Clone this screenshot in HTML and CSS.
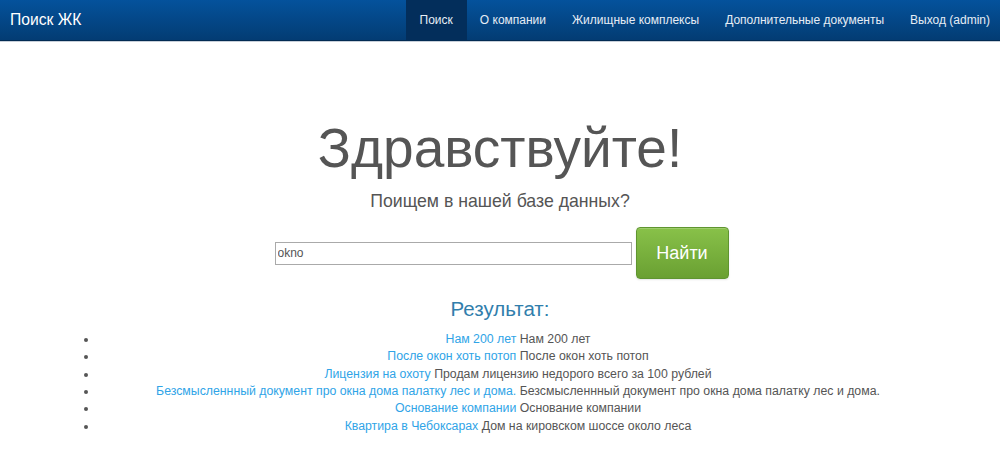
FILE: index.html
```html
<!DOCTYPE html>
<html lang="ru">
<head>
<meta charset="utf-8">
<title>Поиск ЖК</title>
<link rel="stylesheet" href="styles.css">
</head>
<body>
<header class="navbar">
  <a class="brand" href="#">Поиск ЖК</a>
  <ul class="nav">
    <li class="active"><a href="#">Поиск</a></li>
    <li><a href="#">О компании</a></li>
    <li><a href="#">Жилищные комплексы</a></li>
    <li><a href="#">Дополнительные документы</a></li>
    <li><a href="#">Выход (admin)</a></li>
  </ul>
</header>
<main class="hero">
  <h1 class="title">Здравствуйте!</h1>
  <p class="lead">Поищем в нашей базе данных?</p>
  <form class="search">
    <input class="search-input" type="text" value="okno">
    <button class="btn-success" type="button">Найти</button>
  </form>
  <h3 class="results-title">Результат:</h3>
  <ul class="results">
    <li><a href="#">Нам 200 лет</a> Нам 200 лет</li>
    <li><a href="#">После окон хоть потоп</a> После окон хоть потоп</li>
    <li><a href="#">Лицензия на охоту</a> Продам лицензию недорого всего за 100 рублей</li>
    <li><a href="#">Безсмысленнный документ про окна дома палатку лес и дома.</a> Безсмысленнный документ про окна дома палатку лес и дома.</li>
    <li><a href="#">Основание компании</a> Основание компании</li>
    <li><a href="#">Квартира в Чебоксарах</a> Дом на кировском шоссе около леса</li>
  </ul>
</main>
</body>
</html>
```

FILE: styles.css
```css
* { box-sizing: border-box; }

body {
  margin: 0;
  font-family: "Liberation Sans", Arial, sans-serif;
  font-size: 12.3px;
  color: #555555;
  background: #ffffff;
}

a { text-decoration: none; }

.navbar {
  display: flex;
  align-items: stretch;
  justify-content: space-between;
  height: 41px;
  background: linear-gradient(#04529c, #033c73);
  border-bottom: 1px solid #022a52;
  box-shadow: 0 1px 0 #c7cfd9;
}

.brand {
  padding: 0 10px;
  line-height: 40px;
  font-size: 15.7px;
  color: #ffffff;
}

.nav {
  display: flex;
  margin: 0 10px 0 0;
  padding: 0;
  list-style: none;
}

.nav a {
  display: block;
  padding: 0 13px;
  line-height: 40px;
  font-size: 12px;
  color: #e6edf5;
}

.nav li:last-child a { padding-right: 0; }

.nav .active a {
  padding: 0 14px;
  background: #032e5b;
  color: #e6edf5;
}

.hero {
  text-align: center;
  padding-top: 80px;
}

.title {
  margin: 0;
  font-size: 55px;
  line-height: 55px;
  font-weight: normal;
  color: #555555;
}

.lead {
  margin: 10px 0 0;
  font-size: 17.7px;
  line-height: 30px;
}

.search {
  display: flex;
  justify-content: center;
  align-items: center;
  gap: 4px;
  margin: 11px 0 0;
  padding-left: 3px;
}

.search-input {
  width: 357px;
  height: 23px;
  margin: 0;
  padding: 0 2px;
  border: 1px solid #aaaaaa;
  border-radius: 0;
  font-family: "Liberation Sans", Arial, sans-serif;
  font-size: 12px;
  color: #555555;
}

.btn-success {
  width: 93px;
  height: 52px;
  border: 1px solid #5f9530;
  border-radius: 4px;
  background: linear-gradient(#88c149, #6aa032);
  color: #ffffff;
  font-family: "Liberation Sans", Arial, sans-serif;
  font-size: 18px;
  box-shadow: inset 0 1px 0 rgba(255,255,255,0.2), 0 1px 2px rgba(0,0,0,0.1);
}

.results-title {
  margin: 15px 0 0;
  font-size: 20.5px;
  line-height: 30px;
  font-weight: normal;
  color: #317eac;
}

.results {
  margin: 7px 62px 0 98px;
  padding: 0;
  line-height: 17.33px;
}

.results a { color: #2fa4e7; }
```
